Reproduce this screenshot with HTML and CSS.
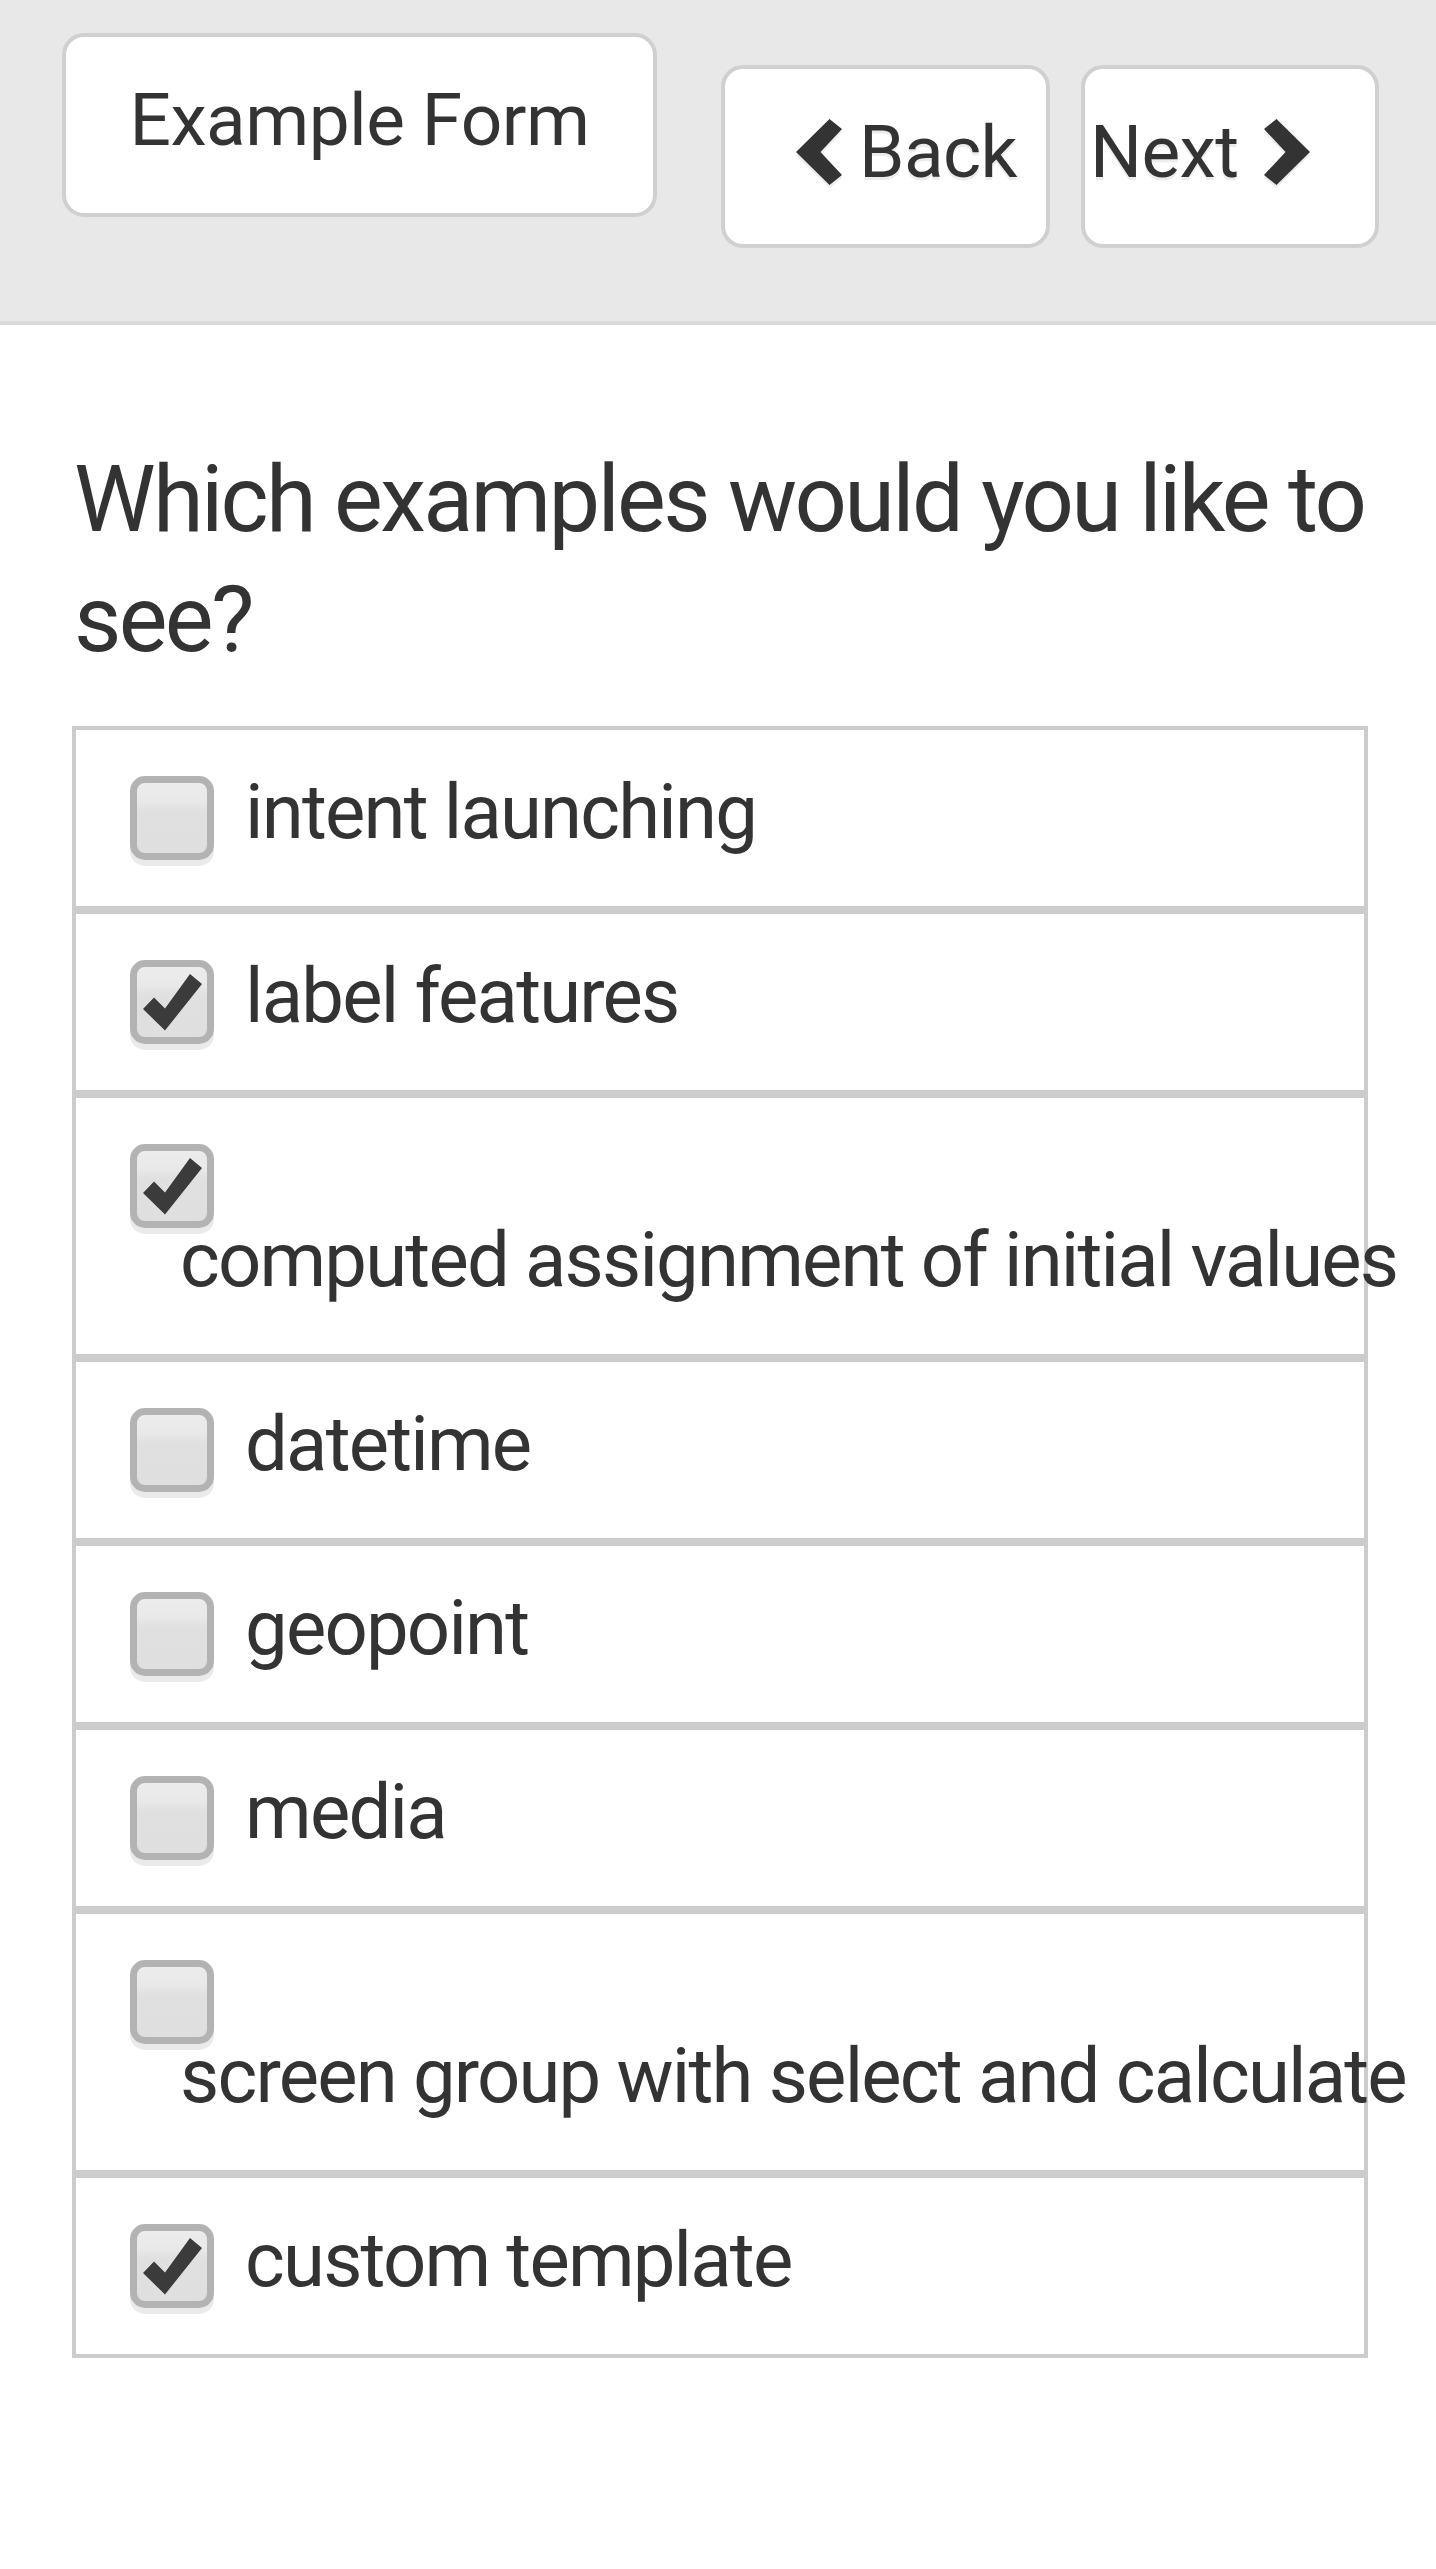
FILE: index.html
```html
<!DOCTYPE html>
<html lang="en">
<head>
<meta charset="utf-8">
<title>Example Form</title>
<link rel="stylesheet" href="styles.css">
</head>
<body>
<header class="topbar">
  <div class="btn btn-title">Example Form</div>
  <div class="btn btn-nav btn-back">
    <svg class="chev" viewBox="0 0 46 66" width="46" height="66"><polygon points="33.5,0 46,10 24.5,33 46,56 33.5,66 0,33"/></svg>
    <span class="btn-label">Back</span>
  </div>
  <div class="btn btn-nav btn-next">
    <span class="btn-label">Next</span>
    <svg class="chev" viewBox="0 0 46 66" width="46" height="66"><polygon points="12.5,0 0,10 21.5,33 0,56 12.5,66 46,33"/></svg>
  </div>
</header>
<main class="content">
  <h1 class="question">Which examples would you like to see?</h1>
  <ul class="options">
    <li class="option"><label class="opt-label"><span class="box"></span> <span class="opt-text">intent launching</span></label></li>
    <li class="option"><label class="opt-label"><span class="box checked"><svg class="tick" viewBox="0 0 84 84"><polygon points="13,49 24,37.5 35,48.5 60,14 72,24 35,70.5"/></svg></span> <span class="opt-text">label features</span></label></li>
    <li class="option"><label class="opt-label"><span class="box checked"><svg class="tick" viewBox="0 0 84 84"><polygon points="13,49 24,37.5 35,48.5 60,14 72,24 35,70.5"/></svg></span> <span class="opt-text">computed assignment of initial values</span></label></li>
    <li class="option"><label class="opt-label"><span class="box"></span> <span class="opt-text">datetime</span></label></li>
    <li class="option"><label class="opt-label"><span class="box"></span> <span class="opt-text">geopoint</span></label></li>
    <li class="option"><label class="opt-label"><span class="box"></span> <span class="opt-text">media</span></label></li>
    <li class="option"><label class="opt-label"><span class="box"></span> <span class="opt-text">screen group with select and calculate</span></label></li>
    <li class="option"><label class="opt-label"><span class="box checked"><svg class="tick" viewBox="0 0 84 84"><polygon points="13,49 24,37.5 35,48.5 60,14 72,24 35,70.5"/></svg></span> <span class="opt-text">custom template</span></label></li>
  </ul>
</main>
</body>
</html>
```
FILE: styles.css
```css
* { box-sizing: border-box; }
html, body {
  margin: 0;
  padding: 0;
  background: #ffffff;
  font-family: Roboto, "Noto Sans", "Liberation Sans", sans-serif;
  color: #333333;
}
.topbar {
  display: flex;
  align-items: flex-start;
  height: 325px;
  padding: 33px 0 0 62px;
  background: #e8e8e8;
  border-bottom: 4px solid #dadada;
}
.btn {
  display: flex;
  align-items: center;
  background: #ffffff;
  border: 4px solid #d0d0d0;
  border-radius: 22px;
  font-size: 73px;
  letter-spacing: -0.6px;
  color: #333333;
}
.btn-title {
  width: 595px;
  height: 184px;
  justify-content: center;
  padding-bottom: 10px;
}
.btn-nav {
  height: 183px;
  margin-top: 32px;
  padding-bottom: 9px;
  text-shadow: 0 3px 0 #ececec;
}
.btn-back {
  width: 329px;
  margin-left: 64px;
  padding-left: 71px;
}
.btn-next {
  width: 298px;
  margin-left: 31px;
  padding-left: 5px;
}
.chev {
  display: block;
  flex: none;
  fill: #333333;
  filter: drop-shadow(0 3px 0 #ececec);
}
.btn-back .chev { margin-right: 17px; }
.btn-next .chev { margin-left: 26px; }
.content {
  padding: 115px 68px 0 72px;
}
.question {
  margin: 0 -40px 0 2px;
  font-size: 92px;
  line-height: 120px;
  font-weight: 400;
  letter-spacing: -2.7px;
}
.options {
  list-style: none;
  margin: 46px 0 0 0;
  padding: 0;
}
.option {
  border: 4px solid #cccccc;
  padding: 42px 0 54px 104px;
}
.opt-label {
  display: block;
  font-size: 76px;
  line-height: 80px;
  letter-spacing: -1.8px;
  color: #333333;
}
.box {
  position: relative;
  display: inline-block;
  width: 84px;
  height: 84px;
  vertical-align: middle;
  margin: -20px 14px -20px -50px;
  border: 7px solid #b3b3b3;
  border-radius: 15px;
  background: linear-gradient(#ececec 0%, #e9e9e9 25%, #e0e0e0 40%, #dfdfdf 100%);
  box-shadow: 0 6px 0 #eaeaea;
}
.tick {
  position: absolute;
  left: -7px;
  top: -7px;
  width: 84px;
  height: 84px;
  fill: #3b3b3b;
}
.opt-text {
  display: inline-block;
  white-space: nowrap;
}
```
